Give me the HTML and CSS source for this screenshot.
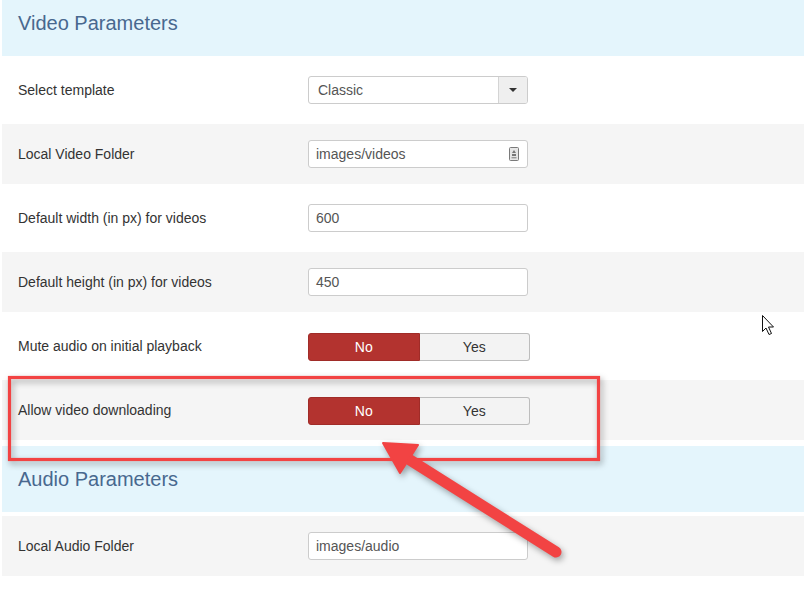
FILE: index.html
```html
<!DOCTYPE html>
<html>
<head>
<meta charset="utf-8">
<link rel="stylesheet" href="styles.css">
</head>
<body>
<div class="page">
  <section class="fieldset">
    <h2 class="legend">Video Parameters</h2>
    <div class="row">
      <div class="label">Select template</div>
      <div class="select"><span class="select-value">Classic</span><span class="select-btn"><span class="caret"></span></span></div>
    </div>
    <div class="row alt">
      <div class="label">Local Video Folder</div>
      <div class="input">images/videos
        <svg class="folder-icon" width="10" height="14" viewBox="0 0 10 14"><rect x="0.5" y="0.5" width="9" height="13" rx="1" fill="#e6e6e6" stroke="#7a7a7a"/><path d="M5 3 L7 6 H3 Z" fill="#777"/><rect x="3" y="7" width="4" height="2" fill="#777"/><rect x="2.5" y="10" width="5" height="1.4" fill="#999"/></svg>
      </div>
    </div>
    <div class="row">
      <div class="label">Default width (in px) for videos</div>
      <div class="input">600</div>
    </div>
    <div class="row alt">
      <div class="label">Default height (in px) for videos</div>
      <div class="input">450</div>
    </div>
    <div class="row">
      <div class="label">Mute audio on initial playback</div>
      <div class="toggle"><span class="opt no">No</span><span class="opt yes">Yes</span></div>
    </div>
    <div class="row alt">
      <div class="label">Allow video downloading</div>
      <div class="toggle"><span class="opt no">No</span><span class="opt yes">Yes</span></div>
    </div>
  </section>
  <section class="fieldset audio">
    <h2 class="legend">Audio Parameters</h2>
    <div class="row alt">
      <div class="label">Local Audio Folder</div>
      <div class="input">images/audio</div>
    </div>
  </section>
</div>

<svg class="annot" width="804" height="594" viewBox="0 0 804 594">
  <g class="shadowed">
    <rect x="9.5" y="377.5" width="589" height="82" fill="none" stroke="#f24343" stroke-width="3.2"/>
    <line x1="410" y1="460" x2="556" y2="552" stroke="#f24343" stroke-width="11" stroke-linecap="round"/>
    <path d="M383 443 L418 445 L400 473 Z" fill="#f24343" stroke="#f24343" stroke-width="2" stroke-linejoin="round"/>
  </g>
  <path class="cursor" d="M762.5 315.5 V331.5 L766 328 L769 334.5 L771.5 333.5 L768.5 327 H773.5 Z" fill="#fff" stroke="#111" stroke-width="1"/>
</svg>
</body>
</html>
```

FILE: styles.css
```css
html, body {
  margin: 0;
  padding: 0;
  background: #ffffff;
  overflow: hidden;
}
body {
  font-family: "Liberation Sans", Arial, sans-serif;
  width: 804px;
  height: 594px;
  position: relative;
}
.page {
  margin: -10px 0 0 2px;
}
.fieldset {
  margin: 0;
}
.fieldset.audio {
  margin-top: 6px;
}
.legend {
  height: 66px;
  margin: 0 0 4px 0;
  padding-left: 16px;
  background: #e4f5fc;
  display: flex;
  align-items: center;
  font-size: 20px;
  font-weight: normal;
  color: #48688f;
}
.row {
  height: 60px;
  margin-bottom: 4px;
  padding-left: 16px;
  display: flex;
  align-items: center;
}
.row.alt {
  background: #f5f5f5;
}
.label {
  width: 290px;
  font-size: 14px;
  color: #333333;
}
.input, .select {
  box-sizing: border-box;
  width: 220px;
  height: 28px;
  border: 1px solid #cccccc;
  border-radius: 3px;
  background: #ffffff;
  font-size: 14px;
  color: #555555;
  display: flex;
  align-items: center;
}
.input {
  padding: 0 7px;
  justify-content: space-between;
}
.folder-icon {
  display: block;
  margin-right: 1px;
}
.select {
  justify-content: space-between;
  overflow: hidden;
}
.select-value {
  padding-left: 9px;
}
.select-btn {
  width: 28px;
  height: 100%;
  background: #efefef;
  border-left: 1px solid #d4d4d4;
  display: flex;
  align-items: center;
  justify-content: center;
}
.caret {
  width: 0;
  height: 0;
  border-left: 4px solid transparent;
  border-right: 4px solid transparent;
  border-top: 4px solid #333;
}
.toggle {
  display: flex;
  width: 222px;
  height: 28px;
  margin-top: 2px;
  font-size: 14px;
}
.opt {
  flex: 1;
  box-sizing: border-box;
  display: flex;
  align-items: center;
  justify-content: center;
}
.opt.no {
  background: #b3332f;
  color: #ffffff;
  border: 1px solid #a02c28;
  border-radius: 3px 0 0 3px;
}
.opt.yes {
  background: #f3f3f3;
  color: #333333;
  border: 1px solid #bdbdbd;
  border-left: none;
  border-radius: 0 3px 3px 0;
}
.annot {
  position: absolute;
  left: 0;
  top: 0;
  pointer-events: none;
}
.shadowed {
  filter: drop-shadow(2px 3px 3px rgba(0, 0, 0, 0.35));
}
```
